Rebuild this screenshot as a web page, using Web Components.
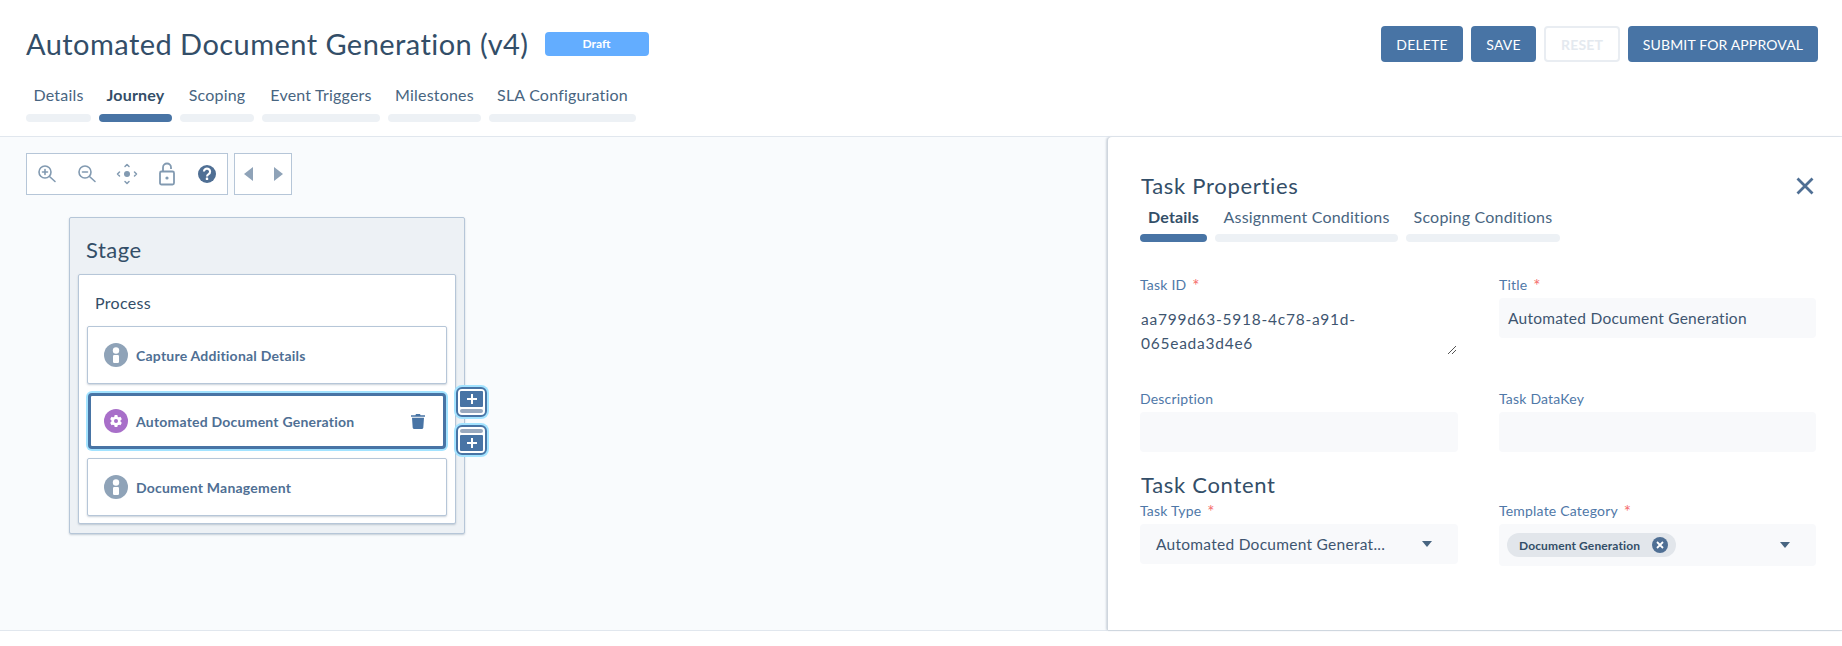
<!DOCTYPE html>
<html>
<head>
<meta charset="utf-8">
<style>
  html, body { margin: 0; padding: 0; background: #fff; }
  body { font-family: "Lato", "Open Sans", sans-serif; color: #334e68; width: 1842px; height: 646px; overflow: hidden; }
</style>
</head>
<body>
<flow-editor></flow-editor>

<script>
const PLUS = `<svg width="10" height="10" viewBox="0 0 10 10"><path d="M5 0v10M0 5h10" stroke="#fff" stroke-width="2"/></svg>`;
const ICONS = {
  zoomIn: `<svg width="22" height="22" viewBox="0 0 22 22" fill="none" stroke="#829ab1" stroke-width="1.6" stroke-linecap="round"><circle cx="9" cy="9" r="6"/><path d="M9 6.5v5M6.5 9h5M13.5 13.5l5.5 5" /></svg>`,
  zoomOut: `<svg width="22" height="22" viewBox="0 0 22 22" fill="none" stroke="#829ab1" stroke-width="1.6" stroke-linecap="round"><circle cx="9" cy="9" r="6"/><path d="M6.5 9h5M13.5 13.5l5.5 5" /></svg>`,
  center: `<svg width="22" height="22" viewBox="0 0 22 22" fill="none" stroke="#829ab1" stroke-width="1.5" stroke-linecap="round" stroke-linejoin="round"><circle cx="11" cy="11" r="3" fill="#829ab1" stroke="none"/><path d="M9 3.5l2-2 2 2M9 18.5l2 2 2-2M3.5 9l-2 2 2 2M18.5 9l2 2-2 2"/></svg>`,
  lock: `<svg width="22" height="24" viewBox="0 0 22 24" fill="none" stroke="#829ab1" stroke-width="1.8"><rect x="4" y="9.5" width="14" height="13" rx="1.5"/><path d="M7 9.5V5.5a4 4 0 0 1 8 0V7"/><circle cx="11" cy="16" r="1.6" fill="#829ab1" stroke="none"/></svg>`,
  help: `<svg width="20" height="20" viewBox="0 0 20 20"><circle cx="10" cy="10" r="9" fill="#4f6f94"/><path d="M6.9 7.6a3.1 3 0 1 1 4.7 2.6c-1 .6-1.6 1.1-1.6 2.2" fill="none" stroke="#fff" stroke-width="2.1"/><rect x="8.8" y="13.6" width="2.4" height="2.4" rx=".5" fill="#fff"/></svg>`,
  left: `<svg width="9" height="14" viewBox="0 0 9 14"><path d="M9 0v14L0 7z" fill="#8fa3b8"/></svg>`,
  right: `<svg width="9" height="14" viewBox="0 0 9 14"><path d="M0 0v14l9-7z" fill="#8fa3b8"/></svg>`,
  user: `<svg width="24" height="24" viewBox="0 0 24 24"><circle cx="12" cy="12" r="12" fill="#8fa3b8"/><circle cx="12" cy="7.5" r="3.2" fill="#fff"/><rect x="9" y="12" width="6" height="8" rx="1.2" fill="#fff"/></svg>`,
  gear: `<svg width="24" height="24" viewBox="0 0 24 24"><circle cx="12" cy="12" r="12" fill="#a86fc9"/><g fill="#fff"><rect x="10.4" y="6" width="3.2" height="12" rx=".8"/><rect x="10.4" y="6" width="3.2" height="12" rx=".8" transform="rotate(60 12 12)"/><rect x="10.4" y="6" width="3.2" height="12" rx=".8" transform="rotate(120 12 12)"/><circle cx="12" cy="12" r="4.6"/></g><circle cx="12" cy="12" r="2" fill="#a86fc9"/></svg>`,
  trash: `<svg width="14" height="16" viewBox="0 0 14 16" fill="#4874a5"><path d="M0 2.2h4.4L5 1h4l.6 1.2H14v1.6H0z"/><path d="M1 4.8h12l-.7 10a1.2 1.2 0 0 1-1.2 1.1H2.9a1.2 1.2 0 0 1-1.2-1.1z"/></svg>`,
  close: `<svg width="18" height="18" viewBox="0 0 18 18" fill="none" stroke="#4f6f94" stroke-width="2.8"><path d="M1.5 1.5l15 15M16.5 1.5l-15 15"/></svg>`,
  caret: `<svg width="10" height="6" viewBox="0 0 10 6"><path d="M0 0h10L5 6z" fill="#486581"/></svg>`,
  chipX: `<svg width="16" height="16" viewBox="0 0 16 16"><circle cx="8" cy="8" r="8" fill="#4f6f94"/><path d="M5 5l6 6M11 5l-6 6" stroke="#fff" stroke-width="1.8" fill="none"/></svg>`,
  grip: `<svg width="10" height="10" viewBox="0 0 10 10" stroke="#555" fill="none"><path d="M1 9l8-8M5 9l4-4"/></svg>`
};

function define(name, html) {
  customElements.define(name, class extends HTMLElement {
    constructor() {
      super();
      this.attachShadow({ mode: 'open' });
    }
    connectedCallback() {
      this.shadowRoot.innerHTML = html(this);
    }
  });
}

define('app-button', (el) => `
  <style>
    :host { display: block; }
    div {
      box-sizing: border-box; height: 36px; display: flex; align-items: center; justify-content: center;
      width: ${el.getAttribute('w')}px; background: #4874a5; color: #fff; border-radius: 4px;
      font: 400 14px "Lato", sans-serif; letter-spacing: .15px; text-transform: uppercase;
    }
    :host([disabled]) div { background: #fff; color: #e4e9ef; border: 2px solid #e9edf2; font-weight: 700; }
  </style>
  <div><slot></slot></div>`);

define('tab-item', (el) => `
  <style>
    :host { display: block; width: ${el.getAttribute('w')}px; }
    .t { height: 28px; text-align: center; font: 400 16px/var(--tab-lh, 20px) "Lato", sans-serif; color: #486581; white-space: nowrap; letter-spacing: .2px; }
    .b { height: 8px; border-radius: 4px; background: #edf1f5; }
    :host([active]) .t { font-weight: 700; color: #334e68; }
    :host([active]) .b { background: #4874a5; }
  </style>
  <div class="t"><slot></slot></div><div class="b"></div>`);

define('tab-bar', () => `
  <style>:host { display: flex; gap: 8px; }</style><slot></slot>`);

define('page-header', () => `
  <style>
    :host { display: block; box-sizing: border-box; height: 137px; border-bottom: 1px solid #e1e7ee; padding: 26px 24px 0 26px; background: #fff; --tab-lh: 18px; }
    .top { display: flex; align-items: flex-start; height: 60px; }
    h1 { margin: 0; font: 400 29px/36px "Lato", sans-serif; letter-spacing: .45px; color: #334e68; white-space: nowrap; }
    .badge { margin: 6px 0 0 16px; width: 104px; height: 24px; border-radius: 4px; background: #63adff; color: #fff; font: 700 12px/24px "Lato", sans-serif; text-align: center; }
    .actions { margin-left: auto; display: flex; gap: 8px; }
  </style>
  <div class="top">
    <h1>Automated Document Generation (v4)</h1>
    <div class="badge">Draft</div>
    <div class="actions">
      <app-button w="82">Delete</app-button>
      <app-button w="65">Save</app-button>
      <app-button w="76" disabled>Reset</app-button>
      <app-button w="190">Submit for Approval</app-button>
    </div>
  </div>
  <tab-bar>
    <tab-item w="65">Details</tab-item>
    <tab-item w="73" active>Journey</tab-item>
    <tab-item w="74">Scoping</tab-item>
    <tab-item w="118">Event Triggers</tab-item>
    <tab-item w="93">Milestones</tab-item>
    <tab-item w="147">SLA Configuration</tab-item>
  </tab-bar>`);

define('tool-bar', () => `
  <style>
    :host { display: flex; gap: 6px; height: 42px; }
    .box { box-sizing: border-box; height: 42px; border: 1px solid #b6c6d8; background: #fff; display: flex; align-items: center; }
    .a { width: 202px; }
    .b { width: 58px; padding: 0 5px; justify-content: space-between; }
    .a span { width: 40px; display: flex; justify-content: center; }
    .b span { width: 16px; display: flex; justify-content: center; }
  </style>
  <div class="box a">
    <span>${ICONS.zoomIn}</span><span>${ICONS.zoomOut}</span><span>${ICONS.center}</span><span>${ICONS.lock}</span><span>${ICONS.help}</span>
  </div>
  <div class="box b"><span>${ICONS.left}</span><span>${ICONS.right}</span></div>`);

define('task-card', (el) => `
  <style>
    :host { display: block; position: relative; }
    .card {
      box-sizing: border-box; height: 58px; display: flex; align-items: center; padding: 0 24px 0 16px; gap: 8px;
      background: #fff; border: 1px solid #b6c6d8; border-radius: 2px; box-shadow: 0 1px 2px rgba(100,120,145,.35);
      font: 700 14px "Lato", sans-serif; letter-spacing: .22px; color: #4f6f94;
    }
    :host([selected]) .card {
      margin: 1px; height: 56px; border: 3px solid #4874a5; border-radius: 4px; padding-left: 13px; padding-right: 18px;
      box-shadow: 0 0 0 2px #a3e3ff;
    }
    svg { flex: none; display: block; }
    .name { flex: 1; }
    .add { position: absolute; left: 369px; width: 31px; height: 30px; box-sizing: border-box; border: 2px solid #4874a5; border-radius: 6px; background: #fff; box-shadow: 0 0 0 2px #a3e3ff; padding: 2px; display: flex; flex-direction: column; gap: 2px; }
    .add.up { top: -5px; }
    .add.down { top: 33px; }
    .plus { flex: 1; background: #4874a5; border-radius: 1px; display: flex; align-items: center; justify-content: center; }
    .bar { height: 4px; border-radius: 2px; background: #98a9bf; }
  </style>
  <div class="card">
    ${el.hasAttribute('selected') ? ICONS.gear : ICONS.user}
    <span class="name"><slot></slot></span>
    ${el.hasAttribute('selected') ? ICONS.trash : ''}
  </div>
  ${el.hasAttribute('selected') ? `
    <div class="add up"><div class="plus">${PLUS}</div><div class="bar"></div></div>
    <div class="add down"><div class="bar"></div><div class="plus">${PLUS}</div></div>` : ''}`);

define('process-box', () => `
  <style>
    :host { display: block; box-sizing: border-box; width: 378px; height: 250px; margin-left: 8px; background: #fff; border: 1px solid #b6c6d8; border-radius: 2px; padding: 0 8px; box-shadow: 0 1px 2px rgba(100,120,145,.35); }
    .title { height: 51px; padding: 17px 0 0 8px; box-sizing: border-box; font: 400 16px/22px "Lato", sans-serif; letter-spacing: .3px; color: #334e68; }
    .list { display: flex; flex-direction: column; gap: 8px; }
  </style>
  <div class="title">Process</div>
  <div class="list"><slot></slot></div>`);

define('stage-box', () => `
  <style>
    :host { display: block; box-sizing: border-box; width: 396px; height: 317px; margin: 22px 0 0 43px; background: #edf1f5; border: 1px solid #b6c6d8; border-radius: 2px; box-shadow: 0 1px 2px rgba(100,120,145,.35); }
    .title { height: 56px; padding: 18px 0 0 16px; box-sizing: border-box; font: 400 22px/28px "Lato", sans-serif; letter-spacing: .5px; color: #334e68; }
  </style>
  <div class="title">Stage</div>
  <slot></slot>`);

define('form-field', (el) => `
  <style>
    :host { display: block; }
    label { display: block; height: 20px; margin-bottom: 3px; font: 400 14px/20px "Lato", sans-serif; letter-spacing: .2px; color: #4f78a8; white-space: nowrap; }
    i { font-style: normal; font-size: 17px; line-height: 0; color: #f56c6c; margin-left: 6px; position: relative; top: 2px; }
  </style>
  <label>${el.getAttribute('label')}${el.hasAttribute('required') ? '<i>*</i>' : ''}</label>
  <slot></slot>`);

define('text-box', () => `
  <style>
    :host { display: flex; box-sizing: border-box; height: 40px; align-items: center; padding: 0 9px; background: #f8f9fb; border-radius: 4px; font: 400 15.5px "Lato", sans-serif; letter-spacing: .25px; color: #3e5570; }
  </style>
  <slot></slot>`);

define('text-area', () => `
  <style>
    :host { display: block; position: relative; box-sizing: border-box; height: 60px; padding: 9px 24px 0 1px; font: 400 15.5px/24px "Lato", sans-serif; letter-spacing: .75px; color: #3e5570; }
    span { position: absolute; right: 1px; bottom: 3px; display: block; line-height: 0; }
  </style>
  <slot></slot><span>${ICONS.grip}</span>`);

define('select-box', (el) => `
  <style>
    :host { display: flex; box-sizing: border-box; height: ${el.getAttribute('h') || 40}px; align-items: center; padding: 0 26px 0 16px; background: #f8f9fb; border-radius: 4px; font: 400 15.5px "Lato", sans-serif; letter-spacing: .27px; color: #3e5570; white-space: nowrap; }
    .v { flex: 1; }
    svg { display: block; }
  </style>
  <div class="v"><slot></slot></div>${ICONS.caret}`);

define('tag-chip', () => `
  <style>
    :host { display: inline-flex; align-items: center; gap: 11px; height: 24px; margin-left: -8px; padding: 0 8px 0 12px; box-sizing: border-box; width: 169px; border-radius: 12px; background: #e2e6eb; font: 700 12px "Lato", sans-serif; letter-spacing: .12px; color: #334e68; white-space: nowrap; }
    svg { display: block; flex: none; }
    span { flex: 1; }
  </style>
  <span><slot></slot></span>${ICONS.chipX}`);

define('task-panel', () => `
  <style>
    :host { display: block; box-sizing: border-box; width: 734px; height: 493px; background: #fff; padding: 34px 26px 0 32px; border-radius: 4px 0 0 0; box-shadow: -1px 0 0 #cfd6de, -2px 0 2px #cfd6de, 0 1px 1px #cfd6de; position: relative; z-index: 1; --tab-lh: 22px; }
    .head { display: flex; justify-content: space-between; align-items: center; height: 30px; }
    h2 { margin: 0 0 0 1px; font: 400 22px/30px "Lato", sans-serif; letter-spacing: .7px; color: #334e68; }
    .head svg { display: block; margin-right: 2px; }
    tab-bar { margin-top: 5px; }
    .grid { display: grid; grid-template-columns: 318px 317px; column-gap: 41px; }
    .r1 { margin-top: 33px; row-gap: 31px; }
    h3 { margin: 18px 0 1px 1px; height: 30px; font: 400 22px/30px "Lato", sans-serif; letter-spacing: .7px; color: #334e68; }
  </style>
  <div class="head"><h2>Task Properties</h2>${ICONS.close}</div>
  <tab-bar>
    <tab-item w="67" active>Details</tab-item>
    <tab-item w="183">Assignment Conditions</tab-item>
    <tab-item w="154">Scoping Conditions</tab-item>
  </tab-bar>
  <div class="grid r1">
    <form-field label="Task ID" required><text-area>aa799d63-5918-4c78-a91d-065eada3d4e6</text-area></form-field>
    <form-field label="Title" required><text-box>Automated Document Generation</text-box></form-field>
    <form-field label="Description"><text-box></text-box></form-field>
    <form-field label="Task DataKey"><text-box></text-box></form-field>
  </div>
  <h3>Task Content</h3>
  <div class="grid">
    <form-field label="Task Type" required><select-box>Automated Document Generat...</select-box></form-field>
    <form-field label="Template Category" required><select-box h="42"><tag-chip>Document Generation</tag-chip></select-box></form-field>
  </div>`);

define('flow-editor', () => `
  <style>
    :host { display: block; height: 646px; background: #fff; }
    .main { display: flex; justify-content: space-between; height: 494px; background: #f9fbfd; border-bottom: 1px solid #e1e7ee; box-sizing: border-box; }
    .canvas { padding: 16px 0 0 26px; }
  </style>
  <page-header></page-header>
  <div class="main">
    <div class="canvas">
      <tool-bar></tool-bar>
      <stage-box>
        <process-box>
          <task-card>Capture Additional Details</task-card>
          <task-card selected>Automated Document Generation</task-card>
          <task-card>Document Management</task-card>
        </process-box>
      </stage-box>
    </div>
    <task-panel></task-panel>
  </div>`);
</script>
</body>
</html>
